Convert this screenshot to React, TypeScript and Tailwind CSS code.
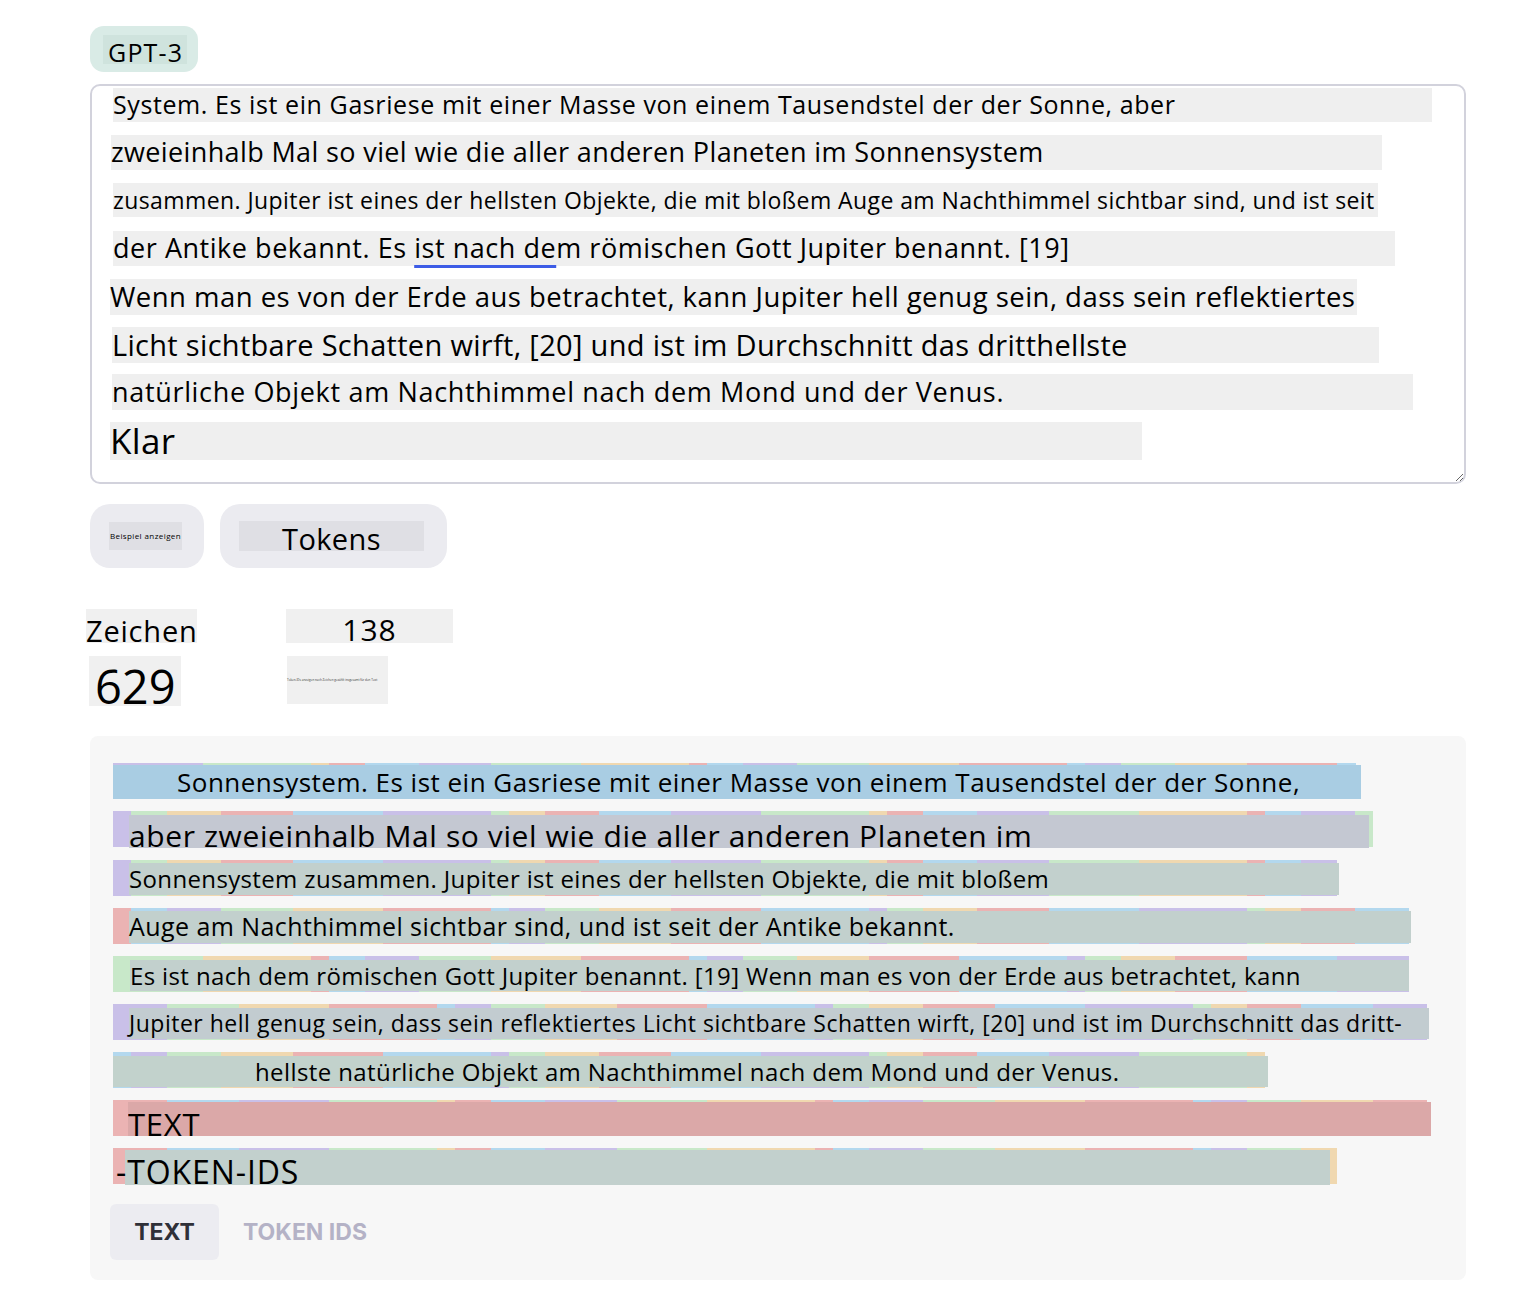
import React from 'react'

const SEG_COLORS = ['bg-[#c9c0e8]', 'bg-[#c8e8c9]', 'bg-[#f0d8b0]', 'bg-[#ebb3b3]', 'bg-[#b3d8ee]']

function segments(seed: number, total: number, start: number) {
  const out: { w: number; c: string }[] = []
  let s = seed
  let used = 0
  let i = start
  while (used < total) {
    s = (s * 9301 + 49297) % 233280
    let w = 18 * (1 + (s % 6))
    if (used + w > total) w = total - used
    out.push({ w, c: SEG_COLORS[i % 5] })
    used += w
    i++
  }
  return out
}

const inputLines = [
  { cls: 'ml-[21px] mt-[1px] w-[1319px] h-[34px] text-[25px] tracking-[0.59px]', text: 'System. Es ist ein Gasriese mit einer Masse von einem Tausendstel der der Sonne, aber' },
  { cls: 'ml-[19px] mt-[13px] w-[1271px] h-[35px] text-[27px] tracking-[0.37px]', text: 'zweieinhalb Mal so viel wie die aller anderen Planeten im Sonnensystem' },
  { cls: 'ml-[21px] mt-[13px] w-[1265px] h-[34px] text-[23px] tracking-[0.42px]', text: 'zusammen. Jupiter ist eines der hellsten Objekte, die mit bloßem Auge am Nachthimmel sichtbar sind, und ist seit' },
  { cls: 'ml-[21px] mt-[14px] w-[1282px] h-[35px] text-[27px] tracking-[0.54px]', text: 'underline' },
  { cls: 'ml-[18px] mt-[13px] w-[1247px] h-[36px] text-[27.5px] tracking-[0.47px]', text: 'Wenn man es von der Erde aus betrachtet, kann Jupiter hell genug sein, dass sein reflektiertes' },
  { cls: 'ml-[20px] mt-[12px] w-[1267px] h-[36px] text-[29px] tracking-[0.31px]', text: 'Licht sichtbare Schatten wirft, [20] und ist im Durchschnitt das dritthellste' },
  { cls: 'ml-[20px] mt-[11px] w-[1301px] h-[36px] text-[27px] tracking-[0.67px]', text: 'natürliche Objekt am Nachthimmel nach dem Mond und der Venus.' },
  { cls: 'ml-[18px] mt-[12px] w-[1032px] h-[38px] text-[35px] tracking-[0.35px]', text: 'Klar' },
]

const tokenRows = [
  { strip: 1243, start: 0, seed: 3, box: 'ml-0 mt-[2px] w-[1248px] h-[34px] bg-[#a9cde3] pl-[64px] text-[26px] tracking-[0.49px]', text: 'Sonnensystem. Es ist ein Gasriese mit einer Masse von einem Tausendstel der der Sonne,' },
  { strip: 1260, start: 0, seed: 11, box: 'ml-[16px] mt-[4px] w-[1240px] h-[33px] bg-[#c4c8d2] text-[30px] tracking-[0.6px] leading-[42px] items-start overflow-hidden', text: 'aber zweieinhalb Mal so viel wie die aller anderen Planeten im' },
  { strip: 1224, start: 0, seed: 29, box: 'ml-[16px] mt-[3px] w-[1210px] h-[32px] bg-[#c2d0cd] text-[24px] tracking-[0.36px]', text: 'Sonnensystem zusammen. Jupiter ist eines der hellsten Objekte, die mit bloßem' },
  { strip: 1296, start: 3, seed: 41, box: 'ml-[16px] mt-[3px] w-[1282px] h-[32px] bg-[#c2d0cd] text-[25px] tracking-[0.43px]', text: 'Auge am Nachthimmel sichtbar sind, und ist seit der Antike bekannt.' },
  { strip: 1296, start: 1, seed: 57, box: 'ml-[17px] mt-[4px] w-[1279px] h-[31px] bg-[#c2d0cd] text-[24px] tracking-[0.37px]', text: 'Es ist nach dem römischen Gott Jupiter benannt. [19] Wenn man es von der Erde aus betrachtet, kann' },
  { strip: 1314, start: 0, seed: 73, box: 'ml-[16px] mt-[4px] w-[1300px] h-[31px] bg-[#c2ccd0] text-[23px] tracking-[0.51px]', text: 'Jupiter hell genug sein, dass sein reflektiertes Licht sichtbare Schatten wirft, [20] und ist im Durchschnitt das dritt-' },
  { strip: 1152, start: 4, seed: 89, box: 'ml-0 mt-[4px] w-[1155px] h-[31px] bg-[#c2d2cc] pl-[142px] text-[24px] tracking-[0.4px]', text: 'hellste natürliche Objekt am Nachthimmel nach dem Mond und der Venus.' },
  { strip: 1314, start: 3, seed: 97, box: 'ml-[15px] mt-[2px] w-[1303px] h-[34px] bg-[#dba8a8] text-[31px] tracking-[0.75px] leading-[44px] items-start overflow-hidden', text: 'TEXT' },
  { strip: 1224, start: 3, seed: 103, box: 'ml-[12px] mt-[2px] w-[1205px] h-[35px] bg-[#c2d0cd] text-[32px] tracking-[0.9px] leading-[44px] items-start', text: 'TOKEN' },
]

export default function App() {
  return (
    <div className="min-h-[1292px] bg-white font-['Open_Sans',sans-serif] text-black">
      <div className="ml-[90px] w-[1376px] pt-[26px]">
        {/* model pill */}
        <div className="flex h-[46px] w-[108px] items-center rounded-[14px] bg-[#d9ebe6] pl-[13px]">
          <span className="flex h-[29px] w-[84px] items-end bg-[#cfe3dd] pl-[5px] text-[25px] leading-[24px] tracking-[1.2px]">GPT-3</span>
        </div>

        {/* input area */}
        <div className="mt-[12px] h-[400px] resize overflow-hidden rounded-[10px] border-2 border-[#d2d2dc] bg-white pt-[1px]">
          {inputLines.map((l, i) => (
            <div key={i} className={`flex items-center whitespace-nowrap bg-[#efefef] ${l.cls}`}>
              {l.text === 'underline' ? (
                <span>
                  der Antike bekannt. Es{' '}
                  <span className="underline decoration-[#3d5ce6] decoration-[3px] underline-offset-[7px]">ist nach de</span>m römischen Gott Jupiter benannt. [19]
                </span>
              ) : (
                <span>{l.text}</span>
              )}
            </div>
          ))}
        </div>

        {/* buttons */}
        <div className="mt-[20px] flex gap-[16px]">
          <div className="flex h-[64px] w-[114px] items-center rounded-[20px] bg-[#ebebf0] pl-[19px]">
            <span className="flex h-[28px] w-[73px] items-center justify-center bg-[#dfdfe4] text-[8px] tracking-[0.4px] whitespace-nowrap">Beispiel anzeigen</span>
          </div>
          <div className="flex h-[64px] w-[227px] items-center rounded-[20px] bg-[#ebebf0] pl-[19px]">
            <span className="flex h-[30px] w-[185px] items-end justify-center bg-[#dfdfe4] text-[29px] leading-[24px] tracking-[0.4px]">Tokens</span>
          </div>
        </div>

        {/* stats */}
        <div className="mt-[41px] flex">
          <div className="-ml-[4px] flex h-[34px] w-[111px] items-end bg-[#f0f0f0] text-[29px] leading-[24px] tracking-[0.8px]">Zeichen</div>
          <div className="ml-[89px] flex h-[34px] w-[167px] items-end justify-center bg-[#f0f0f0] text-[30px] leading-[26px] tracking-[1px]">138</div>
        </div>
        <div className="mt-[13px] flex">
          <div className="-ml-[1px] flex h-[50px] w-[92px] items-end bg-[#f0f0f0] pl-[6px] text-[47px] leading-[40px]">629</div>
          <div className="ml-[106px] flex h-[48px] w-[101px] items-center bg-[#f0f0f0] text-[3px] whitespace-nowrap text-[#333]">
            Token-IDs anzeigen nach Zeichen gezählt insgesamt für den Text
          </div>
        </div>

        {/* tokenized output */}
        <div className="mt-[30px] rounded-[8px] bg-[#f7f7f7] pt-[27px] pb-[20px] pl-[23px]">
          <div className="flex flex-col gap-[12px]">
            {tokenRows.map((r, i) => (
              <div key={i} className="grid w-fit">
                <div className="col-start-1 row-start-1 flex h-[36px]">
                  {segments(r.seed, r.strip, r.start).map((s, j) => (
                    <div key={j} className={s.c} style={{ width: s.w }} />
                  ))}
                </div>
                <div className={`col-start-1 row-start-1 flex items-center whitespace-nowrap ${r.box}`}>
                  {r.text === 'TOKEN' ? (
                    <span className="-ml-[9px]">-TOKEN-IDS</span>
                  ) : (
                    <span>{r.text}</span>
                  )}
                </div>
              </div>
            ))}
          </div>
          <div className="mt-[19px] -ml-[3px] flex items-center gap-[24px] font-['Inter',sans-serif] text-[23px] font-bold">
            <div className="flex h-[56px] w-[109px] items-center justify-center rounded-[6px] bg-[#ececf1] text-[#2f3038]">TEXT</div>
            <div className="text-[#b4b2c6]">TOKEN IDS</div>
          </div>
        </div>
      </div>
    </div>
  )
}
